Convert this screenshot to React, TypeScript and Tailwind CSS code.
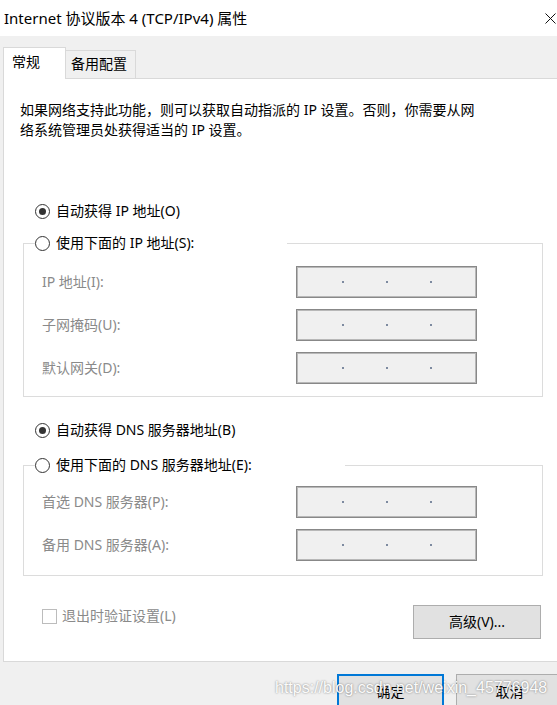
import React from "react";

const font = "font-['Noto_Sans','Noto_Sans_CJK_SC',sans-serif]";

// Windows-style radio button
const Radio = ({ checked }: { checked?: boolean }) => (
  <span className="w-[15px] h-[15px] shrink-0 rounded-full border border-[#333] bg-white flex items-center justify-center">
    {checked && <span className="w-[7px] h-[7px] rounded-full bg-[#333]" />}
  </span>
);

// Disabled IP address box with three separators
const IpBox = () => (
  <div className="w-[181px] h-[32px] border border-[#888] bg-[#f0f0f0] shadow-[inset_0_0_0_1px_#b8b8b8] flex items-center pl-[45px] gap-[42px]">
    <span className="w-[2px] h-[2px] bg-[#7d8aa0]" />
    <span className="w-[2px] h-[2px] bg-[#7d8aa0]" />
    <span className="w-[2px] h-[2px] bg-[#7d8aa0]" />
  </div>
);

const FieldRow = ({ label }: { label: string }) => (
  <div className="flex items-center h-[32px]">
    <span className="w-[254px] text-[14px] leading-[20px] text-[#8a8a8a]">{label}</span>
    <IpBox />
  </div>
);

const App: React.FC = () => {
  return (
    <div className={`relative w-[557px] h-[705px] overflow-hidden bg-[#f0f0f0] text-black ${font}`}>
      {/* ===== Title bar ===== */}
      <div className="h-[36px] bg-white flex items-center justify-between pl-[4px] pr-[1px]">
        <span className="text-[15px] leading-[20px]">Internet 协议版本 4 (TCP/IPv4) 属性</span>
        <svg width="11" height="11" viewBox="0 0 11 11" className="mt-[1px]">
          <path d="M0.5 0.5 L10.5 10.5 M10.5 0.5 L0.5 10.5" stroke="#111" strokeWidth="1" />
        </svg>
      </div>

      {/* ===== Tabs ===== */}
      <div className="flex items-end pl-[3px] pt-[11px]">
        <div className="relative z-10 -mb-px h-[32px] w-[63px] bg-white border border-b-0 border-[#d9d9d9] pl-[8px] pt-[4px] text-[14px] leading-[20px]">
          常规
        </div>
        <div className="h-[28px] w-[70px] border border-l-0 border-b-0 border-[#d9d9d9] pl-[5px] pt-[3px] text-[14px] leading-[20px]">
          备用配置
        </div>
      </div>

      {/* ===== Panel ===== */}
      <div className="ml-[3px] w-[600px] h-[584px] bg-white border border-[#d9d9d9] text-[14px] leading-[20px]">
        <p className="pl-[16px] pt-[21px]">
          如果网络支持此功能，则可以获取自动指派的 IP 设置。否则，你需要从网
          <br />
          络系统管理员处获得适当的 IP 设置。
        </p>

        <label className="mt-[61px] ml-[31px] h-[20px] flex items-center gap-[6px]">
          <Radio checked />
          <span>自动获得 IP 地址(O)</span>
        </label>

        <fieldset className="mt-[12px] ml-[19px] w-[520px] border border-[#dcdcdc] pl-[18px] pt-[13px] pb-[12px]">
          <legend className="ml-[-7px] w-[252px] h-[20px] flex items-center gap-[6px]">
            <Radio />
            <span>使用下面的 IP 地址(S):</span>
          </legend>
          <div className="flex flex-col gap-[11px]">
            <FieldRow label="IP 地址(I):" />
            <FieldRow label="子网掩码(U):" />
            <FieldRow label="默认网关(D):" />
          </div>
        </fieldset>

        <label className="mt-[23px] ml-[31px] h-[20px] flex items-center gap-[6px]">
          <Radio checked />
          <span>自动获得 DNS 服务器地址(B)</span>
        </label>

        <fieldset className="mt-[15px] ml-[19px] w-[520px] border border-[#dcdcdc] pl-[18px] pt-[11px] pb-[14px]">
          <legend className="ml-[-7px] w-[310px] h-[20px] flex items-center gap-[6px]">
            <Radio />
            <span>使用下面的 DNS 服务器地址(E):</span>
          </legend>
          <div className="flex flex-col gap-[11px]">
            <FieldRow label="首选 DNS 服务器(P):" />
            <FieldRow label="备用 DNS 服务器(A):" />
          </div>
        </fieldset>

        <div className="mt-[29px] w-[537px] pl-[38px] flex items-start">
          <label className="mt-[1px] h-[20px] flex items-center gap-[5px] text-[#8a8a8a]">
            <span className="w-[15px] h-[15px] border border-[#bcbcbc] bg-white" />
            <span>退出时验证设置(L)</span>
          </label>
          <button className="ml-auto w-[128px] h-[34px] bg-[#e1e1e1] border border-[#adadad] text-[14px]">
            高级(V)...
          </button>
        </div>
      </div>

      {/* ===== Dialog buttons ===== */}
      <div className="flex gap-[12px] pl-[337px] pt-[12px]">
        <button className="shrink-0 w-[107px] h-[34px] bg-[#e1e1e1] border-2 border-[#0078d7] text-[14px]">
          确定
        </button>
        <button className="shrink-0 w-[107px] h-[34px] bg-[#e1e1e1] border border-[#adadad] text-[14px]">
          取消
        </button>
      </div>

      {/* watermark */}
      <span className="absolute left-[275px] top-[678px] text-[16px] leading-[20px] font-['Liberation_Sans',sans-serif] text-[#fbfbfb] [text-shadow:0_0_2px_rgba(0,0,0,0.5)] pointer-events-none">
        https://blog.csdn.net/weixin_45776948
      </span>
    </div>
  );
};

export default App;
